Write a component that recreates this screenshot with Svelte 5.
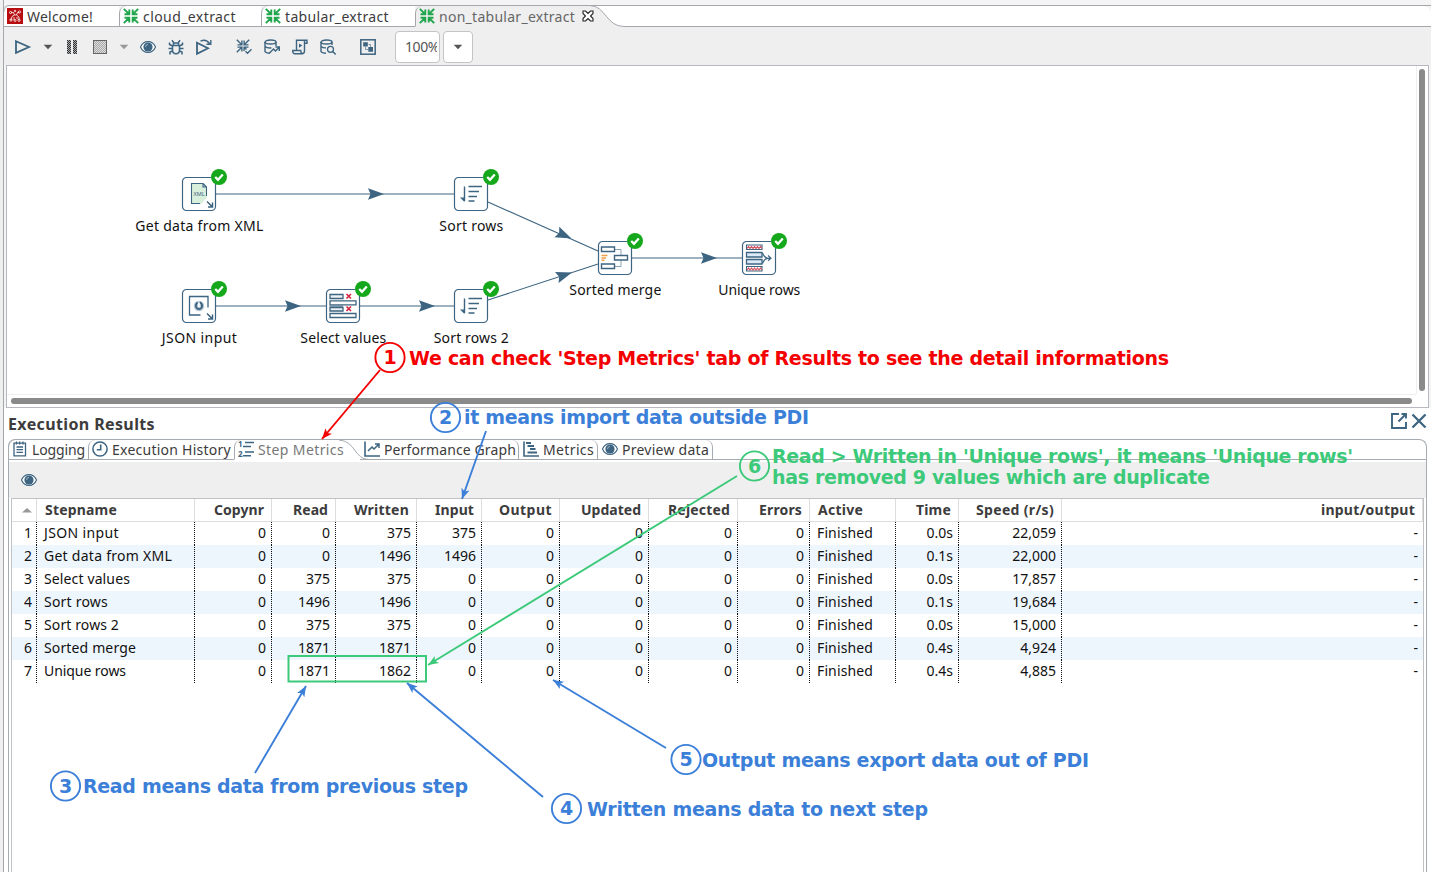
<script>
  const fileTabs = [
    { label: 'Welcome!', icon: 'logo', width: 116, fit: 66 },
    { label: 'cloud_extract', icon: 'trans', width: 142, fit: 93 },
    { label: 'tabular_extract', icon: 'trans', width: 154, fit: 104 },
    { label: 'non_tabular_extract', icon: 'trans', width: 175, fit: 136, active: true }
  ];

  const tools = [
    ['play', 28], ['caret', 21], ['pause', 28], ['stop', 28], ['caretOff', 20],
    ['eye', 28], ['bug', 28], ['replay', 28], ['gap', 12],
    ['verify', 28], ['impact', 28], ['sql', 28], ['explore', 28], ['gap', 12], ['results', 28]
  ];

  const hops = [
    { from: [216, 194], to: [454, 194], mid: [384, 194] },
    { from: [488, 202], to: [598, 251], mid: [571.5, 238.5] },
    { from: [216, 306], to: [326, 306], mid: [301, 306] },
    { from: [360, 306], to: [454, 306], mid: [435, 306] },
    { from: [488, 300], to: [598, 264], mid: [572, 272.5] },
    { from: [632, 258], to: [742, 258], mid: [717, 258] }
  ];

  const steps = [
    { x: 182, y: 177, name: 'Get data from XML', kind: 'xml', w: 128 },
    { x: 454, y: 177, name: 'Sort rows', kind: 'sort', w: 64 },
    { x: 598, y: 241, name: 'Sorted merge', kind: 'merge', w: 92 },
    { x: 742, y: 241, name: 'Unique rows', kind: 'unique', w: 82 },
    { x: 182, y: 289, name: 'JSON input', kind: 'json', w: 75 },
    { x: 326, y: 289, name: 'Select values', kind: 'select', w: 86 },
    { x: 454, y: 289, name: 'Sort rows 2', kind: 'sort', w: 75 }
  ];

  const resultTabs = [
    { label: 'Logging', icon: 'log', width: 80, fit: 53 },
    { label: 'Execution History', icon: 'clock', width: 146, fit: 119 },
    { label: 'Step Metrics', icon: 'list', width: 126, fit: 86, active: true },
    { label: 'Performance Graph', icon: 'graph', width: 159, fit: 132, after: true },
    { label: 'Metrics', icon: 'gantt', width: 79, fit: 51, after: true },
    { label: 'Preview data', icon: 'eye', width: 115, fit: 87, after: true }
  ];

  const columns = [
    ['Stepname', 72], ['Copynr', 50], ['Read', 35], ['Written', 55], ['Input', 39], ['Output', 53],
    ['Updated', 60], ['Rejected', 62], ['Errors', 43], ['Active', 45], ['Time', 35], ['Speed (r/s)', 78], ['input/output', 94]
  ];
  const rows = [
    ['JSON input', '0', '0', '375', '375', '0', '0', '0', '0', 'Finished', '0.0s', '22,059', '-'],
    ['Get data from XML', '0', '0', '1496', '1496', '0', '0', '0', '0', 'Finished', '0.1s', '22,000', '-'],
    ['Select values', '0', '375', '375', '0', '0', '0', '0', '0', 'Finished', '0.0s', '17,857', '-'],
    ['Sort rows', '0', '1496', '1496', '0', '0', '0', '0', '0', 'Finished', '0.1s', '19,684', '-'],
    ['Sort rows 2', '0', '375', '375', '0', '0', '0', '0', '0', 'Finished', '0.0s', '15,000', '-'],
    ['Sorted merge', '0', '1871', '1871', '0', '0', '0', '0', '0', 'Finished', '0.4s', '4,924', '-'],
    ['Unique rows', '0', '1871', '1862', '0', '0', '0', '0', '0', 'Finished', '0.4s', '4,885', '-']
  ];
  const nameWidths = [75, 128, 86, 64, 75, 92, 82];

  const red = '#f40000', blue = '#3b7fd9', green = '#3cca7a';
  const notes = [
    { n: 1, cx: 390, cy: 357.5, color: red, lines: [["We can check 'Step Metrics' tab of Results to see the detail informations", 409, 364.5, 760]], arrow: [380, 370, 322, 439] },
    { n: 2, cx: 445.5, cy: 417.5, color: blue, lines: [['it means import data outside PDI', 464, 424, 345]], arrow: [486, 431, 462, 499] },
    { n: 3, cx: 65.5, cy: 786, color: blue, lines: [['Read means data from previous step', 83, 793, 385]], arrow: [255, 773, 306, 686] },
    { n: 4, cx: 566.5, cy: 808.5, color: blue, lines: [['Written means data to next step', 587, 816, 341]], arrow: [543, 797, 407, 683] },
    { n: 5, cx: 686, cy: 759.5, color: blue, lines: [['Output means export data out of PDI', 702, 767, 387]], arrow: [666, 748, 553, 680] },
    { n: 6, cx: 754.5, cy: 466, color: green, lines: [["Read > Written in 'Unique rows', it means 'Unique rows'", 772, 463, 581], ['has removed 9 values which are duplicate', 772, 484, 438]], arrow: [737, 476, 428, 665] }
  ];

  function head([x1, y1, x2, y2]) {
    const a = (Math.atan2(y2 - y1, x2 - x1) * 180) / Math.PI;
    return `translate(${x2} ${y2}) rotate(${a})`;
  }
  function hopHead(h) {
    const a = (Math.atan2(h.to[1] - h.from[1], h.to[0] - h.from[0]) * 180) / Math.PI;
    return `translate(${h.mid[0]} ${h.mid[1]}) rotate(${a})`;
  }

  // Spreads the letters of a label evenly so that it fills the given width.
  function fit(node, width) {
    const apply = () => {
      node.style.letterSpacing = '0px';
      const natural = node.getBoundingClientRect().width;
      node.style.letterSpacing = `${(width - natural) / node.textContent.length}px`;
    };
    apply();
    document.fonts?.ready.then(apply);
  }
</script>

{#snippet icon(name)}
  <svg class="icon" width="16" height="16" viewBox="0 0 16 16" fill="none" stroke="#3d6480" stroke-width="1.5">
    {#if name === 'logo'}
      <rect width="16" height="16" fill="#b70d10" stroke="none" />
      <g stroke="#fff" stroke-width=".8">
        <path d="M4 4.5h2.5l1 2.5h2l1-2.5H12M7.5 7 5 8.5 4 12M9.5 7 12 9v3M7 9v3M10 9v2" />
        <circle cx="3.6" cy="4.5" r="1.1" /><circle cx="12.4" cy="4" r="1.1" /><circle cx="4" cy="12" r="1.1" /><circle cx="12" cy="12.3" r="1.1" /><circle cx="8" cy="12.5" r="1" /><circle cx="8" cy="3" r=".8" />
      </g>
    {:else if name === 'trans'}
      <path d="M.8 .8 6 6M6.300 1.500v4.800H1.500M15.200 .8 10 6M9.700 1.500v4.800h4.800M.8 15.200 6 10M6.300 14.500V9.700H1.500M15.200 15.200 10 10M9.700 14.500V9.700h4.800" stroke="#22a64d" stroke-width="1.900" />
    {:else if name === 'play'}
      <path d="M1 2.2 14 8 1 13.8z" stroke-width="1.8" />
    {:else if name === 'caret'}
      <path d="M3.700 5.800h8.600L8 10.300z" fill="#555" stroke="none" />
    {:else if name === 'caretOff'}
      <path d="M3.700 5.800h8.600L8 10.300z" fill="#999" stroke="none" />
    {:else if name === 'pause'}
      <path d="M3 1h4v14H3zM9 1h4v14H9z" fill="url(#dither)" stroke="none" />
    {:else if name === 'stop'}
      <rect x="1.5" y="1.5" width="13" height="13" fill="url(#ditherLight)" stroke="#666" stroke-width="1" />
    {:else if name === 'eye'}
      <path d="M.5 8C3.500.8 12.500.8 15.500 8 12.500 15.200 3.500 15.200 .5 8z" fill="#fff" stroke-width="1.1" />
      <circle cx="8" cy="8" r="4.600" fill="#3d6480" stroke="none" />
      <path d="M8 5.300Q5.600 5.600 5.500 8" stroke="#dfe7ec" stroke-width=".6" />
    {:else if name === 'bug'}
      <path d="M4.500 6.500h7v4.500q0 3.700-3.500 3.700T4.500 11zM5.500 6V4h5v2M5.500 3.500 4 1.200M10.500 3.500 12 1.200M4.500 7 1.500 5.500V3.500M11.500 7l3-1.500V3.500M4.500 9.500H.5M11.500 9.500h4M4.500 12 2 13v2.500M11.500 12l2.500 1v2.500" stroke-width="1.500" />
    {:else if name === 'replay'}
      <path d="M1 3.700 12 9.300 1 14.800z" stroke-width="1.800" />
      <path d="M4.500 2.200Q10-.5 13.500 4.500M14.800 1v4.300h-4.300" stroke-width="1.400" />
    {:else if name === 'verify'}
      <path d="M.8.8 5.500 5.500M5.900 1.500v4.400H1.500M13.200.8 8.500 5.500M8.100 1.500v4.400h4.400M.8 13.200 5.500 8.500M5.900 12.500V8.100H1.500M8.100 12V8.100h4.400M8.500 8.500l2 2M9.500 12.300l2 2 4-4" stroke-width="1.400" />
    {:else if name === 'impact'}
      <ellipse cx="6.500" cy="3" rx="5.500" ry="2" stroke-width="1.400" />
      <path d="M1 3v9.500q1 1.700 5 1.700M12 3v4M1 7.500q2.500 2 6.500 1.400M5.500 14l4-4 2 2L15 8.500M11.500 8H15.300v4" stroke-width="1.400" />
    {:else if name === 'sql'}
      <path d="M4.500 11V1.200h10.500v3h-2.500M12.500 1.500V12q0 2.700-2.500 2.700H2.500Q.7 14.500.7 11.500h8q0 2.500 1.500 3" stroke-width="1.400" />
      <path d="M7 4.500 10.300 6.500 7 8.700z" fill="#3d6480" stroke="none" />
    {:else if name === 'explore'}
      <ellipse cx="6.500" cy="3" rx="5.500" ry="2" stroke-width="1.400" />
      <path d="M1 3v9.500q1 1.700 5 1.700M12 3v3M1 7.500q2 1.500 5 1.400" stroke-width="1.400" />
      <circle cx="10.500" cy="10.300" r="3" stroke-width="1.300" /><path d="m12.700 12.500 3 3" />
    {:else if name === 'results'}
      <rect x=".8" y=".8" width="14.400" height="14.400" stroke-width="1.500" />
      <path d="M3.200 3.200h4.600v4.200H3.200zM8.300 8h4.700v4.700H8.300z" fill="#3d6480" stroke="none" />
      <path d="M5.500 8v2.500H8M8.500 5.500h2V8" stroke-width=".6" />
    {:else if name === 'log'}
      <path d="M2 2.200h11.500v12.600H2zM4.500 6h6.500M4.500 8.700h6.500M4.500 11.400h6.500" stroke-width="1.300" />
      <path d="M4.500.5v3M7.700.5v3M11 .5v3" stroke-width="1.300" />
    {:else if name === 'clock'}
      <circle cx="8" cy="8" r="7.100" stroke-width="1.500" /><path d="M8.700 3.500v5.200H4.800" stroke-width="1.600" />
    {:else if name === 'list'}
      <path d="M7 1.500h9M5 5.500h8M7 11h9M5 14.800h8" stroke-width="1.400" />
      <text x="0" y="6" class="tiny">1</text><text x="0" y="16" class="tiny">2</text>
    {:else if name === 'graph'}
      <path d="M1 .5V15h15" stroke-width="1.600" /><path d="m4 10 4-4 2 2 4.500-4.500M11 3h4v4" stroke-width="1.500" />
    {:else if name === 'gantt'}
      <path d="M1 .5V15h15" stroke-width="1.600" /><path d="M3 2h5M4.500 5H11M7 8h5.500M4.500 11.500H14" stroke-width="1.900" />
    {:else if name === 'popout'}
      <path d="M8 1H1v14h14V9M10.500 1H15v4.500M15 1 7.500 8.500" stroke-width="1.900" />
    {:else if name === 'close'}
      <path d="m1.500 1.500 13 13M14.500 1.500l-13 13" stroke-width="2.300" />
    {/if}
  </svg>
{/snippet}

{#snippet glyph(kind)}
  {#if kind === 'xml'}
    <path d="M9.500 6h11.500l4 4.500v10L19 27H9.500z" fill="#d8efdc" stroke="none" />
    <path d="M18 26.500H9.500V6.500h11.500v3.500h3.500v9M21 6.500l3.500 3.500" stroke-width="1.100" />
    <text x="17" y="19" text-anchor="middle" class="xml">XML</text>
    <path d="m25 24.500 5 5M30.500 25.500v4.500h-4.500" stroke-width="1.500" />
  {:else if kind === 'json'}
    <path d="M18.500 26H7.500V7.500h18.500v11M7.500 26h11" stroke-width="1.300" />
    <circle cx="17" cy="17" r="5.300" fill="#b9c9d5" stroke="none" />
    <path d="M15.500 13.500q-2.800 2.500-.8 5.500 3 2.600 5.200-.8 1-3-1.900-5" stroke-width="1.800" />
    <path d="M17 14v4" stroke="#fff" stroke-width="1.600" />
    <path d="m25 24.500 5 5M30.500 25.500v4.500h-4.500" stroke-width="1.500" />
  {:else if kind === 'sort'}
    <path d="M10.500 9.500v14.500M14.500 9.500H28M14.500 14.500H25M14.500 19.500h8.500M14.500 24h6" stroke-width="1.400" />
    <path d="M6 20.500h4.500V25z" fill="#3d6480" stroke="none" />
  {:else if kind === 'merge'}
    <path d="M17 8.500h6v17h-6" stroke-width=".6" />
    <path d="M3.500 6h13v4.500h-13zM3.500 23h13v4.500h-13zM16.500 14.500h13V19h-13z" fill="#fff" stroke-width="1.400" />
    <path d="M3.500 14.500H9.500M3.500 17H8M3.500 19.300H6.500" stroke="#f0a045" stroke-width="1.500" />
  {:else if kind === 'unique'}
    <path d="M4.500 11.500h15.500v4.500H4.500zM4.500 18.500h15.500V23H4.500z" fill="#dce9f8" stroke-width="1.300" />
    <path d="M4.500 4h15.500v4.500H4.500zM4.500 25.500h15.500V30H4.500z" fill="#fff" stroke-width="1.100" />
    <path d="m5 7.500 1.500-2 1.500 2 1.500-2 1.500 2 1.500-2 1.500 2 1.500-2 1.500 2 1.500-2 1.500 2M5 29l1.500-2L8 29l1.500-2 1.500 2 1.500-2 1.500 2 1.500-2 1.500 2 1.500-2 1.500 2" stroke="#d45560" stroke-width="1.200" />
    <path d="M20.500 12q1.500 4.500 5 5.300M20.500 22.500q1.500-4.500 5-5.200H28M26 14.500l3 2.700-3 2.500" stroke-width="1.200" />
  {:else if kind === 'select'}
    <path d="M3.500 17.300h13.500" stroke="#8fa3b3" stroke-width="2" />
    <path d="M4 5.500h13V9.500H4zM4 18.500h13V22H4z" fill="#eef2f6" stroke-width="1.300" />
    <path d="M4 11.800h26V15.800H4zM4 24.500h26V28.500H4z" fill="#fff" stroke-width="1.300" />
    <path d="m20.500 5 4.500 4.500M25 5l-4.500 4.500M20.500 17.500 25 22M25 17.500 20.500 22" stroke="#d3233f" stroke-width="1.600" />
  {/if}
{/snippet}

<svg class="defs" width="0" height="0" aria-hidden="true">
  <defs>
    <pattern id="dither" width="2" height="2" patternUnits="userSpaceOnUse"><rect width="2" height="2" fill="#aaa" /><path d="M0 0h1v1H0zM1 1h1v1H1z" fill="#303439" /></pattern>
    <pattern id="ditherLight" width="2" height="2" patternUnits="userSpaceOnUse"><rect width="2" height="2" fill="#ddd" /><path d="M0 0h1v1H0zM1 1h1v1H1z" fill="#a9a9a9" /></pattern>
  </defs>
</svg>

<div class="window">
  <nav class="file-tabs">
    {#each fileTabs as tab}
      <div class="file-tab" class:active={tab.active} style:width="{tab.width}px">
        {@render icon(tab.icon)}
        <span class="label"><span use:fit={tab.fit}>{tab.label}</span></span>
        {#if tab.active}
          <svg class="x" width="12" height="12" viewBox="0 0 12 12"><path d="M1 1h2.500L6 3.500 8.500 1H11v2.500L8.500 6 11 8.500V11H8.500L6 8.500 3.500 11H1V8.500L3.500 6 1 3.500z" fill="#fff" stroke="#222" stroke-width="1.100" /></svg>
        {/if}
      </div>
    {/each}
    <svg class="tail" width="34" height="22" viewBox="0 0 34 22">
      <path d="M0 .5C16 1 16 21.500 34 21.500V22H0z" fill="#efefef" />
      <path d="M0 .5H34M0 .5C16 1 16 21.500 34 21.500" fill="none" stroke="#a5a7ad" />
    </svg>
    <div class="tab-rest"></div>
  </nav>

  <div class="toolbar">
    {#each tools as [name, width]}
      <div class="tool" style:width="{width}px">
        {#if name !== 'gap'}{@render icon(name)}{/if}
      </div>
    {/each}
    <div class="zoom"><div class="zoom-text"><span use:fit={34}>100%</span></div></div>
    <div class="zoom-drop">{@render icon('caret')}</div>
  </div>

  <section class="canvas">
    <svg class="graph" width="1409" height="328" viewBox="7 66 1409 328" fill="none" stroke="#3d6480">
      {#each hops as hop}
        <path d="M{hop.from[0]} {hop.from[1]}L{hop.to[0]} {hop.to[1]}" stroke-width="1.100" />
        <path d="M0 0-16-5.800-13.500 0-16 5.800z" fill="#3d6480" stroke="none" transform={hopHead(hop)} />
      {/each}
      {#each steps as step}
        <g transform="translate({step.x} {step.y})">
          <rect x=".5" y=".5" width="33" height="33" rx="4" fill="#fff" stroke-width="1.200" />
          {@render glyph(step.kind)}
          <circle cx="37" cy="0" r="8" fill="#15a81c" stroke="none" />
          <path d="m33.200 0 2.800 2.800L40.800-2.500" stroke="#fff" stroke-width="2.300" />
          <text x={17.3 - step.w / 2} y="54" textLength={step.w} class="step-name">{step.name}</text>
        </g>
      {/each}
    </svg>
    <div class="vtrack"><div class="vthumb"></div></div>
    <div class="htrack"><div class="hthumb"></div></div>
  </section>

  <section class="results">
    <header class="results-head">
      <h2><span use:fit={147}>Execution Results</span></h2>
      <div class="actions">{@render icon('popout')}{@render icon('close')}</div>
    </header>

    <div class="panel">
      <nav class="result-tabs">
        {#each resultTabs as tab}
          <div class="result-tab" class:active={tab.active} class:after={tab.after} style:width="{tab.width}px">
            {@render icon(tab.icon)}
            <span class="label"><span use:fit={tab.fit}>{tab.label}</span></span>
            {#if tab.active}
              <svg class="slope" width="38" height="20" viewBox="0 0 38 20"><path d="M0 0C17 1 15 19.500 30 19.500" fill="none" stroke="#a5abb0" /></svg>
            {/if}
          </div>
        {/each}
        <div class="result-rest"></div>
      </nav>
      <div class="preview">{@render icon('eye')}</div>
      <div class="table">
        <div class="row header">
          <div class="num"><svg width="10" height="6" viewBox="0 0 10 6"><path d="M0 5.500 5 1l5 4.500z" fill="#999" /></svg></div>
          {#each columns as [title, w], i}
            <div class="cell" class:left={i === 0 || i === 9}><span use:fit={w}>{title}</span></div>
          {/each}
        </div>
        {#each rows as row, r}
          <div class="row body" class:alt={r % 2 === 1}>
            <div class="num">{r + 1}</div>
            {#each row as value, i}
              <div class="cell" class:left={i === 0 || i === 9}>
                {#if i === 0}<span use:fit={nameWidths[r]}>{value}</span>{:else if i === 9}<span use:fit={56}>{value}</span>{:else}{value}{/if}
              </div>
            {/each}
          </div>
        {/each}
      </div>
    </div>
  </section>

  <svg class="notes" width="1431" height="872" viewBox="0 0 1431 872">
    <rect x="288.500" y="656" width="137.500" height="25.500" fill="none" stroke={green} stroke-width="2" />
    {#each notes as note}
      <path d="M{note.arrow[0]} {note.arrow[1]}L{note.arrow[2]} {note.arrow[3]}" stroke={note.color} stroke-width="1.900" />
      <path d="M0 0-10.500-4.200-8 0-10.500 4.200z" fill={note.color} transform={head(note.arrow)} />
      <circle cx={note.cx} cy={note.cy} r="14.600" fill="none" stroke={note.color} stroke-width="1.900" />
      <text x={note.cx} y={note.cy + 6.500} text-anchor="middle" fill={note.color}>{note.n}</text>
      {#each note.lines as [content, x, y, w]}
        <text {x} {y} textLength={w} fill={note.color}>{content}</text>
      {/each}
    {/each}
  </svg>
</div>

<style>
  :global(body) { overflow: hidden; background: #efefef; }
  .defs { position: absolute; }
  .window {
    position: relative; box-sizing: border-box; width: 1431px; height: 872px;
    padding: 5px 0 0 3px; display: flex; flex-direction: column; overflow: hidden;
    background: linear-gradient(90deg, #efefef 0 3px, #a5a7ad 3px 4px, #f4f4f4 4px);
    font: 14px "Noto Sans", sans-serif; color: #3c3c3c;
  }
  .icon { flex: none; display: block; overflow: visible; }
  .tiny { font: 700 8px "Noto Sans", sans-serif; fill: #3d6480; stroke: none; }
  .xml { font: 5.500px "Noto Sans", sans-serif; fill: #3d6480; stroke: none; }
  .label { white-space: nowrap; }

  .file-tabs { height: 22px; flex: none; display: flex; box-sizing: border-box; border-top: 1px solid #a5a7ad; border-radius: 6px 0 0 0; }
  .file-tab {
    box-sizing: border-box; flex: none; display: flex; align-items: center; gap: 4px; padding-left: 3px;
    background: #fff; border-left: 1px solid #a5a7ad; border-bottom: 1px solid #a5a7ad; border-radius: 7px 0 0 0;
  }
  .file-tab.active { position: relative; z-index: 1; background: #efefef; border-bottom-color: #efefef; color: #666; }
  .x { margin-left: 3px; flex: none; }
  .tail { flex: none; margin-top: -1px; background: #fff; }
  .tab-rest { flex: 1; background: #fff; border-bottom: 1px solid #a5a7ad; border-top-right-radius: 8px; }

  .toolbar { height: 38px; flex: none; display: flex; align-items: center; padding: 1px 0 0 5px; margin-left: 1px; background: #efefef; box-sizing: border-box; }
  .tool { height: 30px; display: flex; align-items: center; justify-content: center; flex: none; }
  .zoom, .zoom-drop { box-sizing: border-box; height: 32px; background: #fff; border: 1px solid #c3c4c8; border-radius: 4px; display: flex; align-items: center; }
  .zoom { width: 45px; margin: 0 3px 0 13px; padding: 0 2px 0 9px; color: #555; white-space: nowrap; }
  .zoom-text { overflow: hidden; width: 32px; }
  .zoom-drop { width: 30px; justify-content: center; }

  .canvas {
    box-sizing: border-box; flex: none; width: 1423px; height: 343px; margin-left: 3px; background: #fff;
    border: 1px solid #b6b9c0; display: grid; grid-template: 328px 1fr / 1409px 1fr;
  }
  .graph { display: block; }
  .step-name { font: 14px "Noto Sans", sans-serif; fill: #111; stroke: none; }
  .vtrack { border-left: 1px solid #eee; padding: 3px 0 3px 2px; }
  .vthumb { width: 6px; height: 322px; border-radius: 3px; background: #8a8a8a; }
  .htrack { border-top: 1px solid #eee; padding: 3px 4px; box-sizing: border-box; }
  .hthumb { height: 6px; border-radius: 3px; background: #8a8a8a; }

  .results { flex: 1; display: flex; flex-direction: column; margin-left: 1px; background: #fff; }
  .results-head { height: 31px; flex: none; display: flex; align-items: center; justify-content: space-between; padding: 0 4px; box-sizing: border-box; }
  h2 { margin: 0; font-size: 16px; line-height: 22px; white-space: nowrap; }
  .actions { display: flex; gap: 4px; margin-top: -5px; }
  .panel { flex: 1; margin: 0 4px; display: flex; flex-direction: column; border: solid #a5abb0; border-width: 1px 1px 0; border-radius: 7px 8px 0 0; }
  .result-tabs { display: flex; height: 20px; flex: none; margin-left: -1px; }
  .result-tab { box-sizing: border-box; flex: none; display: flex; align-items: center; gap: 4px; padding: 0 0 1px 4px; border-bottom: 1px solid #a5abb0; position: relative; }
  .result-tab:not(.after) { border-left: 1px solid #a5abb0; border-radius: 7px 0 0 0; padding-left: 3px; }
  .result-tab.after { border-right: 1px solid #a5abb0; border-radius: 0 7px 0 0; }
  .result-tab.active { border-bottom-color: #fff; color: #777; }
  .slope { position: absolute; left: 104px; top: 0; overflow: visible; }
  .result-rest { flex: 1; border-bottom: 1px solid #a5abb0; }
  .preview { height: 36px; flex: none; margin-top: 2px; padding-left: 12px; display: flex; align-items: center; background: #efefef; }

  .table { flex: 1; margin: 0 2px; border: solid #bfc1c5; border-width: 1px 1px 0; }
  .row { display: grid; grid-template-columns: 25px 158px 77px 64px 81px 65px 78px 89px 89px 72px 86px 63px 103px 1fr; height: 23px; line-height: 22px; color: #111; }
  .row > div { border-right: 1px dotted #111; text-align: right; padding-right: 5px; box-sizing: border-box; white-space: nowrap; overflow: hidden; }
  .row > div:last-child { border-right-color: transparent; padding-right: 4px; }
  .row > div.num { padding-right: 4px; }
  .row > div.left { text-align: left; padding-left: 7px; }
  .row.header { font-weight: 700; color: #3c3c3c; border-bottom: 1px solid #ddd; height: 22px; }
  .row.header > div { border-right: 1px solid #ddd; padding-right: 7px; }
  .row.header > div.num { display: flex; align-items: center; justify-content: flex-end; padding-right: 4px; }
  .row.header > div.left { padding-left: 8px; }
  .alt { background: #eef6fd; }

  .notes { position: absolute; inset: 0; pointer-events: none; }
  .notes text { font: 700 19px "DejaVu Sans", sans-serif; }
</style>
